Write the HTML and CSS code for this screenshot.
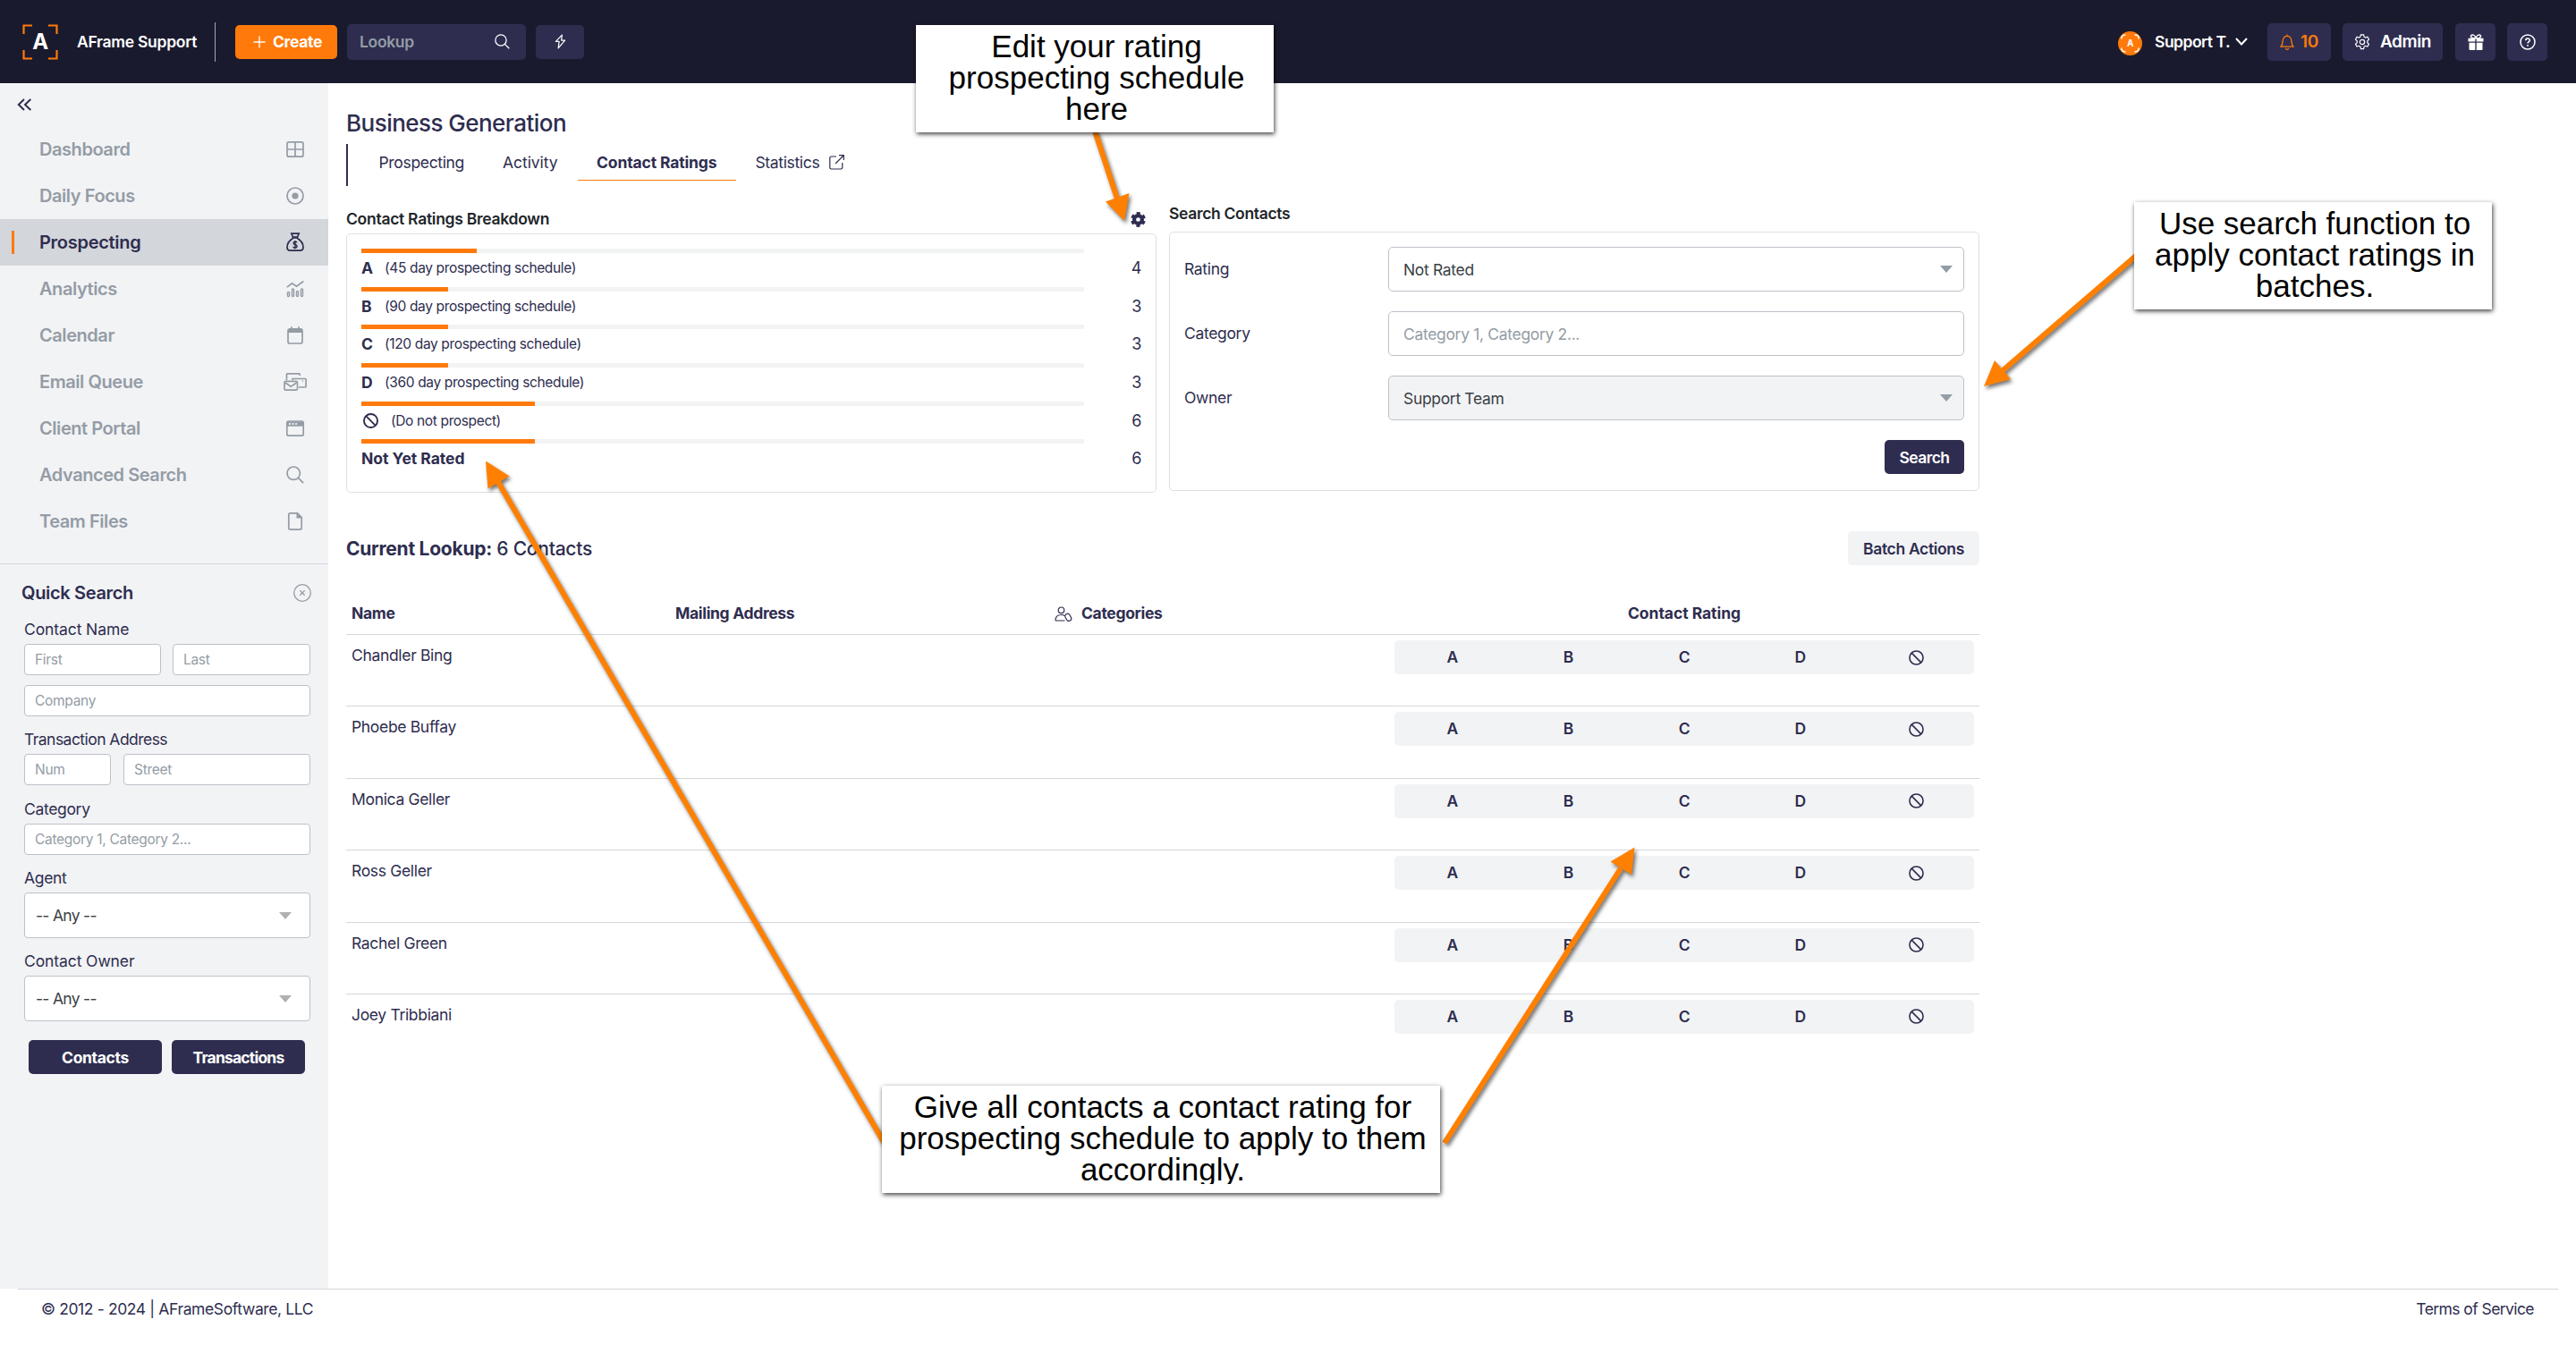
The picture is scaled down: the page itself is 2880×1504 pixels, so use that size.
FILE: index.html
```html
<!DOCTYPE html>
<html lang="en">
<head>
<meta charset="utf-8">
<title>Business Generation - AFrame</title>
<link rel="stylesheet" href="styles.css">
</head>
<body>
<svg class="sprite" aria-hidden="true">
  <symbol id="ban" viewBox="0 0 16 16"><circle cx="8" cy="8" r="7.1"/><path d="M3 3l10 10"/></symbol>
  <symbol id="search" viewBox="0 0 20 20"><circle cx="8.2" cy="8.2" r="7.2"/><path d="M13.4 13.4L19.2 19.2"/></symbol>
  <symbol id="cog" viewBox="0 0 18 18"><path d="M7.4.9h3.2l.5 2.3 1.6.9 2.2-.8 1.6 2.8-1.7 1.6v2l1.7 1.6-1.6 2.8-2.2-.8-1.6.9-.5 2.4H7.4l-.5-2.4-1.6-.9-2.2.8-1.6-2.8 1.7-1.6v-2L1.500 6.100l1.600-2.800 2.200.8 1.600-.9z"/><circle cx="9" cy="9" r="2.700"/></symbol>
</svg>

<header class="topbar">
  <svg class="logo" viewBox="0 0 40 40"><path d="M1.500 11V1.500H11M29 1.500h9.500V11M38.500 29v9.500H29M11 38.500H1.500V29"/><text x="20" y="28">A</text></svg>
  <span class="brand">AFrame Support</span>
  <span class="split"></span>
  <a class="create"><svg viewBox="0 0 14 14"><path d="M7 .5v13M.5 7h13"/></svg>Create</a>
  <div class="lookup"><span>Lookup</span><svg class="line"><use href="#search"/></svg></div>
  <a class="tool flash"><svg viewBox="0 0 14 18"><path d="M9 1L1.500 8.800h4L4.500 17l8-9.500h-4.300z"/></svg></a>
  <div class="right">
    <svg class="avatar" viewBox="0 0 27 27"><circle cx="13.500" cy="13.500" r="13.500" fill="#ff7a0a"/><path d="M4 8.500V6.500Q5 4 8.500 4M18.500 4q4 0 4.500 2.500v2M23 18.500v2Q22 23 18.500 23M8.500 23Q5 23 4 20.500v-2"/><text x="13.500" y="17.300">A</text></svg>
    <span class="user">Support T.</span>
    <svg class="chev" viewBox="0 0 14 9"><path d="M1 1l6 6.500L13 1"/></svg>
    <a class="tool bell"><svg viewBox="0 0 16 18"><path d="M1 14.200h14c-1.600-1.600-2-3.600-2.200-6.800C12.500 4.400 10.800 2.300 8 2.300S3.500 4.400 3.200 7.400C3 10.600 2.600 12.600 1 14.200zM8 .6v1.700M6.300 15.800Q6.600 17.300 8 17.300t1.700-1.500"/></svg>10</a>
    <a class="tool admin"><svg><use href="#cog"/></svg>Admin</a>
    <a class="tool gift"><svg viewBox="0 0 18 18"><path fill="#fff" d="M.5 4.800h7.800v3.700H.5zM9.700 4.800h7.800v3.700H9.700zM1.500 9.800h6.800V18H2.500a1 1 0 0 1-1-1zM9.700 9.800h6.800V17a1 1 0 0 1-1 1H9.700z"/><path fill="none" stroke="#fff" stroke-width="1.500" d="M9 4.800C4.500 5 3 3.500 3.600 2 4.500.2 8 .6 9 4.800zM9 4.800c4.500.2 6-1.300 5.400-2.800C13.500.2 10 .6 9 4.800z"/></svg></a>
    <a class="tool help"><svg viewBox="0 0 18 18"><circle cx="9" cy="9" r="8"/><path d="M6.700 7.200C6.700 4.200 11.300 4.300 11.300 7 11.300 8.700 9 8.700 9 10.500M9 12v1.700"/></svg></a>
  </div>
</header>

<div class="body">
<aside class="side">
  <div class="collapse"><svg viewBox="0 0 17 14"><path d="M8 1L1.800 7 8 13M15.300 1L9 7l6.300 6"/></svg></div>
  <nav class="menu">
    <a>Dashboard<svg viewBox="0 0 20 20"><rect x="1" y="1.800" width="18" height="16.400" rx="2"/><path d="M10 2v16M1 10h18"/></svg></a>
    <a>Daily Focus<svg viewBox="0 0 20 20"><circle cx="10" cy="10" r="9"/><circle class="solid" cx="10" cy="10" r="3.600"/></svg></a>
    <a class="on">Prospecting<svg viewBox="0 0 20 20"><path d="M5.800.2h8.400L12.500 4h-5zM6.500 5h7M7.500 5.500C3 8.200 1 12.200 1 15.500c0 2.500 1.200 3.600 3.400 3.600h11.200c2.200 0 3.400-1.100 3.400-3.600 0-3.300-2-7.300-6.500-10"/><path class="thin" d="M12 10.200Q11.500 9.200 10 9.200 8.100 9.200 8.100 10.700T10 12.500 12 14.300 10 16 7.900 14.800M10 8v9.300"/></svg></a>
    <a>Analytics<svg viewBox="0 0 20 20"><path d="M.8 8.200L6.500 3.800l5 3.400L19.300 1.500"/><g class="thin"><rect x="1.500" y="13.500" width="2" height="5" rx="1"/><rect x="6.500" y="10" width="2" height="8.500" rx="1"/><rect x="11.500" y="12.500" width="2" height="6" rx="1"/><rect x="16.500" y="10" width="2" height="8.500" rx="1"/></g></svg></a>
    <a>Calendar<svg viewBox="0 0 20 20"><rect x="2" y="2.800" width="16" height="16.200" rx="2"/><path class="solid" d="M2 3h16v4H2z"/><path d="M6 .3v3M14 .3v3"/></svg></a>
    <a>Email Queue<svg class="wide" viewBox="0 0 26 20"><path d="M3.500 8V1.500Q3.500.8 4.200.8h13.300Q18.200.8 18.200 1.500V3M10 8V6.500h14.200q.9 0 .9.900v7.700q0 .9-.9.900H17"/><rect x="1" y="9.300" width="14.500" height="9.900" rx="1.500"/><path d="M2 11l6.200 4.300L14.600 11M21 9.200h.8"/></svg></a>
    <a>Client Portal<svg viewBox="0 0 20 20"><rect x=".8" y="2" width="18.400" height="16.200" rx="2"/><path class="solid" d="M1 2.500h18v5.200H1z"/><path class="dots" d="M4 5h.1M7.500 5h.1M11 5h.1"/></svg></a>
    <a>Advanced Search<svg><use href="#search"/></svg></a>
    <a>Team Files<svg viewBox="0 0 20 20"><path d="M12.500.9H4.700q-1.900 0-1.900 1.900v14.400q0 1.900 1.900 1.900h10.600q1.900 0 1.900-1.900V5.600z"/><path class="solid" d="M11.500 1v5.500H17V5.600L12.500 1z"/></svg></a>
  </nav>
  <section class="quick">
    <h2>Quick Search<svg viewBox="0 0 20 20"><circle cx="10" cy="10" r="9.300"/><path d="M7.300 7.300l5.400 5.400M12.700 7.300l-5.400 5.400"/></svg></h2>
    <label class="t1">Contact Name</label>
    <div class="pair"><div class="in">First</div><div class="in">Last</div></div>
    <div class="in co">Company</div>
    <label class="t2">Transaction Address</label>
    <div class="pair addr"><div class="in">Num</div><div class="in">Street</div></div>
    <label class="lc">Category</label>
    <div class="in">Category 1, Category 2...</div>
    <label>Agent</label>
    <div class="in pick">-- Any --<i></i></div>
    <label class="t1">Contact Owner</label>
    <div class="in pick">-- Any --<i></i></div>
    <div class="acts"><a class="btn">Contacts</a><a class="btn tr">Transactions</a></div>
  </section>
</aside>

<main class="main">
  <h1>Business Generation</h1>
  <nav class="tabs"><a>Prospecting</a><a class="act">Activity</a><a class="on">Contact Ratings</a><a>Statistics<svg viewBox="0 0 17 17"><path d="M8 2H2.500Q.8 2 .8 3.700v10.600q0 1.700 1.700 1.700h10.600q1.700 0 1.700-1.700V9M11 .7h5.300V6M16 1L7 10"/></svg></a></nav>

  <div class="cols">
    <section>
      <h3 class="left">Contact Ratings Breakdown<svg viewBox="0 0 18 18"><circle cx="9" cy="9" r="4.700" stroke-width="4.400"/><circle cx="9" cy="9" r="7.500" stroke-width="2.800" stroke-dasharray="4.300 3.554" stroke-dashoffset="-1.770"/></svg></h3>
      <div class="card rates">
        <div class="rate"><div><div class="track"><b style="width:16%"></b></div><p><strong>A</strong>(45 day prospecting schedule)</p></div><span>4</span></div>
        <div class="rate"><div><div class="track"><b style="width:12%"></b></div><p><strong>B</strong>(90 day prospecting schedule)</p></div><span>3</span></div>
        <div class="rate"><div><div class="track"><b style="width:12%"></b></div><p><strong>C</strong>(120 day prospecting schedule)</p></div><span>3</span></div>
        <div class="rate"><div><div class="track"><b style="width:12%"></b></div><p><strong>D</strong>(360 day prospecting schedule)</p></div><span>3</span></div>
        <div class="rate"><div><div class="track"><b style="width:24%"></b></div><p><svg><use href="#ban"/></svg>(Do not prospect)</p></div><span>6</span></div>
        <div class="rate"><div><div class="track"><b style="width:24%"></b></div><p><strong class="nyr">Not Yet Rated</strong></p></div><span>6</span></div>
      </div>
    </section>
    <section>
      <h3>Search Contacts</h3>
      <div class="card find">
        <div class="row"><span>Rating</span><div class="field">Not Rated<i></i></div></div>
        <div class="row"><span>Category</span><div class="field hint">Category 1, Category 2...</div></div>
        <div class="row"><span>Owner</span><div class="field off">Support Team<i></i></div></div>
        <a class="btn go">Search</a>
      </div>
    </section>
  </div>

  <div class="current"><h4><strong>Current Lookup:</strong> 6 Contacts</h4><a class="btn batch">Batch Actions</a></div>

  <div class="grid head"><span>Name</span><span>Mailing Address</span><span class="cats"><svg viewBox="0 0 20 17"><circle cx="7.500" cy="4.300" r="3.300"/><path d="M1 16c0-4 1.500-6.500 6.500-6.500 2 0 3.200.5 4 1.200M1 16h10.500"/><rect x="12.500" y="8.200" width="5.500" height="8.300" rx="2.700" transform="rotate(-30 15.200 12.300)"/></svg>Categories</span><span class="mid">Contact Rating</span></div>
  <div class="grid"><span>Chandler Bing</span><div class="rating"><b>A</b><b>B</b><b>C</b><b>D</b><svg><use href="#ban"/></svg></div></div>
  <div class="grid"><span>Phoebe Buffay</span><div class="rating"><b>A</b><b>B</b><b>C</b><b>D</b><svg><use href="#ban"/></svg></div></div>
  <div class="grid"><span>Monica Geller</span><div class="rating"><b>A</b><b>B</b><b>C</b><b>D</b><svg><use href="#ban"/></svg></div></div>
  <div class="grid"><span>Ross Geller</span><div class="rating"><b>A</b><b>B</b><b>C</b><b>D</b><svg><use href="#ban"/></svg></div></div>
  <div class="grid"><span>Rachel Green</span><div class="rating"><b>A</b><b>B</b><b>C</b><b>D</b><svg><use href="#ban"/></svg></div></div>
  <div class="grid"><span>Joey Tribbiani</span><div class="rating"><b>A</b><b>B</b><b>C</b><b>D</b><svg><use href="#ban"/></svg></div></div>
</main>
</div>

<footer class="foot"><span>© 2012 - 2024 | AFrameSoftware, LLC</span><a>Terms of Service</a></footer>

<svg class="arrows" viewBox="0 0 2880 1504">
  <g><path d="M1224 146L1249 222"/><polygon points="1257,247 1236,225.500 1262.500,216"/></g>
  <g><path d="M2388 286L2237 416"/><polygon points="2218,432 2230,403 2248,424"/></g>
  <g><path d="M988 1277L557 539"/><polygon points="543,515.500 545.500,546.500 569.500,532.500"/></g>
  <g><path d="M1615 1278L1812 971"/><polygon points="1827.500,947.500 1800.500,963.500 1824,978"/></g>
</svg>
<div class="note n1"><p>Edit your rating<br>prospecting schedule<br>here</p></div>
<div class="note n2"><p>Use search function to<br>apply contact ratings in<br>batches.</p></div>
<div class="note n3"><p>Give all contacts a contact rating for<br>prospecting schedule to apply to them<br>accordingly.</p></div>
</body>
</html>
```
FILE: styles.css
```css
* { box-sizing: border-box; }
body {
  margin: 0; width: 2880px; height: 1504px; position: relative; overflow: hidden;
  display: flex; flex-direction: column; background: #fff; color: #2e2d4f;
  font: 400 17.5px "Inter", sans-serif; letter-spacing: -.33px;
}
h1, h2, h3, h4, p { margin: 0; font-weight: 400; }
svg { fill: none; stroke: currentColor; flex: none; }
.sprite { position: absolute; width: 0; height: 0; }

/* top bar */
.topbar { height: 93px; flex: none; background: #1a1a2e; color: #fff; display: flex; align-items: center; padding: 0 32px 0 25px; font-weight: 600; }
.logo { width: 40px; height: 40px; stroke: #ff7a0a; stroke-width: 2.200; }
.logo text { font: 700 24px "Inter", sans-serif; fill: #fff; stroke: none; text-anchor: middle; }
.brand { width: 154px; margin-left: 21px; white-space: nowrap; letter-spacing: -.28px; }
.split { width: 1px; height: 44px; background: #a5a7b1; }
.create { width: 114px; height: 38px; margin-left: 22px; background: #ff7a0a; border-radius: 5px; display: flex; align-items: center; padding-left: 20px; font-weight: 700; }
.create svg { width: 14px; height: 14px; stroke-width: 1.300; margin-right: 8px; }
.lookup { width: 200px; height: 40px; margin-left: 11px; padding: 0 18px 0 14px; background: #2e2d50; color: #949ca5; border-radius: 5px; display: flex; align-items: center; justify-content: space-between; }
.lookup svg { width: 17px; height: 17px; color: #fff; stroke-width: 1.500; }
.tool { height: 42px; background: #2e2d50; border-radius: 5px; display: flex; align-items: center; justify-content: center; }
.flash { width: 54px; height: 38px; margin-left: 11px; }
.flash svg { width: 13px; height: 17px; stroke-width: 1.300; stroke-linejoin: round; }
.right { margin-left: auto; display: flex; align-items: center; }
.avatar { width: 27px; height: 27px; margin: 3px 14px 0 0; stroke: #fff; stroke-width: 1.500; }
.avatar circle { stroke: none; }
.avatar text { font: 700 10px "Inter", sans-serif; fill: #fff; stroke: none; text-anchor: middle; }
.user { width: 90px; letter-spacing: -.5px; white-space: nowrap; }
.chev { width: 14px; height: 9px; stroke-width: 2; }
.bell { width: 71px; margin-left: 22px; color: #ff7a0a; font-size: 19px; gap: 7px; }
.bell svg { width: 16px; height: 18px; stroke-width: 1.200; }
.admin { width: 112px; margin-left: 13px; font-size: 19px; letter-spacing: -.4px; gap: 11px; }
.admin svg { width: 18px; height: 18px; stroke-width: 1.200; }
.gift { width: 45px; margin-left: 14px; }
.gift svg { width: 18px; height: 18px; stroke: none; }
.help { width: 45px; margin-left: 13px; }
.help svg { width: 18px; height: 18px; stroke-width: 1.500; }

/* sidebar */
.body { height: 1348px; flex: none; display: flex; }
.side { width: 367px; background: #f2f3f5; }
.collapse { height: 48px; display: flex; align-items: center; padding-left: 19px; }
.collapse svg { width: 17px; height: 14px; stroke-width: 2; }
.menu { padding-bottom: 21px; border-bottom: 1px solid #d3d6db; }
.menu a { height: 52px; padding: 0 27px 0 44px; display: flex; align-items: center; justify-content: space-between; font-size: 20px; font-weight: 600; letter-spacing: -.44px; color: #949ca5; }
.menu svg { width: 20px; height: 20px; stroke-width: 1.700; overflow: visible; }
.menu svg.wide { width: 26px; margin-right: -3px; }
.menu .solid { fill: currentColor; stroke: none; }
.menu .thin { stroke-width: 1.400; }
.menu .dots { stroke: #fff; stroke-width: 2; stroke-linecap: round; }
.menu .on { background: linear-gradient(#ff7a0a, #ff7a0a) 13px 13px / 3px 26px no-repeat #d3d6db; color: #2e2d4f; letter-spacing: -.28px; }
.quick { padding: 10px 20px 0 27px; }
.quick h2 { height: 44px; margin: 0 -1px 0 -3px; display: flex; align-items: center; justify-content: space-between; font-size: 20px; font-weight: 600; }
.quick h2 svg { width: 20px; height: 20px; color: #949ca5; stroke-width: 1.300; }
.quick label { display: block; height: 31px; line-height: 30px; margin-top: 11px; }
.quick h2 + label { margin-top: 4px; }
.quick .t1 { letter-spacing: -.1px; }
.quick .t2 { letter-spacing: -.54px; }
.quick .lc { margin-top: 12px; }
.in { height: 35px; border: 1px solid #bdc1c9; border-radius: 4px; background: #fff; padding-left: 11px; font-size: 15.500px; letter-spacing: -.3px; color: #949ca5; display: flex; align-items: center; }
.pair { display: grid; grid-template-columns: 153px 154px; gap: 13px; }
.pair.addr { grid-template-columns: 97px 209px; gap: 14px; }
.co { margin-top: 11px; }
.pick { height: 51px; padding: 0 20px 0 12px; justify-content: space-between; font-size: 17.500px; letter-spacing: -.7px; color: #3b3f45; }
.pick i, .field i { border: 7px solid transparent; border-top: 8px solid #b0b0b0; border-bottom: 0; }
.acts { margin: 21px 6px 0 5px; display: flex; gap: 11px; }
.acts .btn { flex: 1; }
.btn { height: 38px; border-radius: 5px; background: #2e2d50; color: #fff; font-weight: 700; display: flex; align-items: center; justify-content: center; }
.tr { letter-spacing: -.8px; }

/* main column */
.main { padding: 27px 0 0 20px; width: 1846px; }
h1 { font-size: 26px; line-height: 36px; height: 41px; font-weight: 550; letter-spacing: -.53px; }
.tabs { height: 47px; border-left: 2px solid #2e2d4f; padding-left: 13px; display: flex; }
.tabs a { height: 41px; line-height: 39px; padding: 0 21.500px 1px; display: flex; align-items: center; }
.tabs .act { letter-spacing: -.06px; padding-right: 22px; }
.tabs .on { font-weight: 700; letter-spacing: -.15px; border-bottom: 1px solid #ff7a0a; padding-bottom: 0; }
.tabs svg { width: 17px; height: 17px; margin-left: 11px; stroke-width: 1.200; }
.cols { height: 343px; display: grid; grid-template-columns: 906px 906px; gap: 14px; padding-top: 16px; }
h3 { height: 35px; line-height: 30px; font-size: 17.500px; font-weight: 600; color: #212529; display: flex; }
.left { height: 37px; line-height: 42px; justify-content: space-between; padding-right: 12px; letter-spacing: -.28px; }
.left svg { width: 17px; height: 17px; margin-top: 13px; color: #2e2d4f; }
.card { border: 1px solid #dddfe3; border-radius: 5px; height: 290px; }
.rates { padding: 16px 16px 0; }
.rate { display: flex; justify-content: space-between; height: 42.660px; }
.rate > div { width: 808px; }
.track { height: 5px; background: #f2f3f5; border-radius: 1px; }
.track b { display: block; height: 5px; background: #ff7a0a; }
.rate p { line-height: 34px; font-size: 15.500px; letter-spacing: -.36px; display: flex; align-items: center; }
.rate strong { width: 26px; font-size: 17.500px; white-space: nowrap; }
.rate .nyr { letter-spacing: -.02px; }
.rate svg { width: 17px; height: 17px; margin: 0 14px 0 2px; stroke-width: 1.800; }
.rate span { padding-top: 5px; line-height: 33px; font-size: 18px; }
.find { padding: 16px; }
.row { display: flex; justify-content: space-between; align-items: center; margin-bottom: 22px; }
.row > span { padding-bottom: 1px; }
.field { width: 644px; height: 50px; border: 1px solid #bdc1c9; border-radius: 5px; padding: 0 12px 0 16px; display: flex; align-items: center; justify-content: space-between; color: #3b3f45; }
.field i { border-top-color: #949ca5; }
.off { background: #f2f3f5; }
.hint { color: #949ca5; }
.go { width: 89px; margin-left: auto; letter-spacing: -.6px; font-weight: 600; }
.current { height: 38px; margin-top: 43px; display: flex; justify-content: space-between; align-items: center; }
.current h4 { font-size: 21px; font-weight: 500; letter-spacing: -.25px; }
.batch { width: 147px; background: #f2f3f5; color: #2e2d4f; font-weight: 600; }
.grid { height: 80.400px; border-bottom: 1px solid #d3d6db; display: grid; grid-template-columns: 362px 424px 380px 660px; line-height: 45px; }
.grid:last-child { border-bottom: 0; }
.grid > span { padding-left: 6px; }
.head { height: 47px; margin-top: 31px; line-height: 46px; font-weight: 700; }
.grid > .mid { padding: 0; text-align: center; letter-spacing: -.05px; }
.cats { display: flex; align-items: center; }
.cats svg { width: 20px; height: 17px; margin-right: 10px; stroke-width: 1.200; }
.rating { grid-column: 4; height: 38px; margin: 6px 6px 0; background: #f2f3f5; border-radius: 5px; display: grid; grid-template-columns: repeat(5, 1fr); align-items: center; justify-items: center; }
.rating b { font-weight: 600; line-height: 38px; }
.rating svg { width: 17px; height: 17px; stroke-width: 1.500; }

.foot { margin: 0 20px; border-top: 1px solid #d3d6db; height: 63px; padding: 0 27px 0 26px; display: flex; justify-content: space-between; line-height: 44px; }
.foot span { letter-spacing: -.38px; }
.foot a { letter-spacing: -.58px; }

/* annotations */
.arrows { position: absolute; left: 0; top: 0; width: 2880px; height: 1504px; }
.arrows g { filter: drop-shadow(2px 3px 2px rgba(0, 0, 0, .55)); }
.arrows path { stroke: #ff8000; stroke-width: 6; }
.arrows polygon { fill: #ff8000; stroke: none; }
.note { position: absolute; width: 400px; height: 120px; padding: 6px 0 0 4px; background: #fff; box-shadow: 1px 2px 5px rgba(0, 0, 0, .75); color: #000; font: 35px/35px "Liberation Sans", Arial, sans-serif; letter-spacing: 0; text-align: center; white-space: nowrap; }
.n1 { left: 1024px; top: 28px; }
.n2 { left: 2386px; top: 226px; }
.n3 { left: 986px; top: 1214px; width: 624px; }
/* the last line's descenders are cropped by the text frame */
.n3 p { height: 104px; overflow: clip; }
```
